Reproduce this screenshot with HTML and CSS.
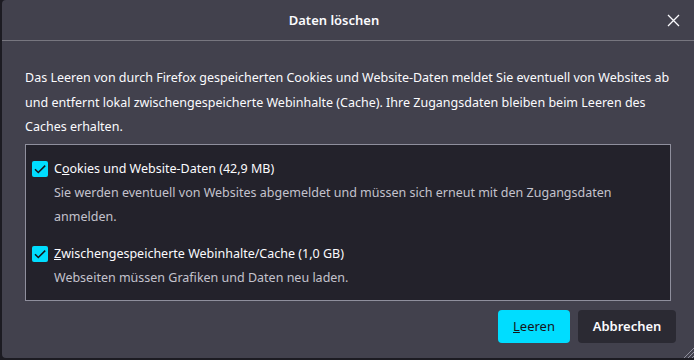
FILE: index.html
```html
<!DOCTYPE html>
<html lang="de">
<head>
<meta charset="utf-8">
<title>Daten löschen</title>
<link rel="stylesheet" href="styles.css">
</head>
<body>
<div class="dialog">
  <div class="header">
    <div class="title">Daten löschen</div>
    <button class="close" aria-label="Schließen">
      <svg width="13" height="13" viewBox="0 0 13 13"><path d="M1 1 L12 12 M12 1 L1 12" stroke="#fbfbfe" stroke-width="1.3" fill="none"/></svg>
    </button>
  </div>
  <div class="content">
    <p class="intro">Das Leeren von durch Firefox gespeicherten Cookies und Website-Daten meldet Sie eventuell von Websites ab und entfernt lokal zwischengespeicherte Webinhalte (Cache). Ihre Zugangsdaten bleiben beim Leeren des Caches erhalten.</p>
    <div class="box">
      <div class="option">
        <div class="row">
          <span class="check"><svg width="16" height="16" viewBox="0 0 16 16"><path d="M3 8.2 L6.3 11.5 L13.2 4.6" stroke="#15141a" stroke-width="1.5" fill="none"/></svg></span>
          <span class="label">C<u>o</u>okies und Website-Daten (42,9 MB)</span>
        </div>
        <div class="desc">Sie werden eventuell von Websites abgemeldet und müssen sich erneut mit den Zugangsdaten anmelden.</div>
      </div>
      <div class="option">
        <div class="row">
          <span class="check"><svg width="16" height="16" viewBox="0 0 16 16"><path d="M3 8.2 L6.3 11.5 L13.2 4.6" stroke="#15141a" stroke-width="1.5" fill="none"/></svg></span>
          <span class="label"><u>Z</u>wischengespeicherte Webinhalte/Cache (1,0 GB)</span>
        </div>
        <div class="desc">Webseiten müssen Grafiken und Daten neu laden.</div>
      </div>
    </div>
  </div>
  <div class="buttons">
    <button class="btn primary"><u>L</u>eeren</button>
    <button class="btn secondary">Abbrechen</button>
  </div>
  <svg class="grip" width="14" height="14" viewBox="0 0 14 14"><path d="M14 2 L2 14 M14 6 L6 14 M14 10 L10 14" stroke="#8f8f9d" stroke-width="1" fill="none"/></svg>
</div>
</body>
</html>
```
FILE: styles.css
```css
html, body {
  margin: 0;
  padding: 0;
}
body {
  background: #1c1b22;
  font-family: "Noto Sans", "Open Sans", sans-serif;
  font-size: 12.5px;
  color: #fbfbfe;
  overflow: hidden;
}
.dialog {
  position: relative;
  margin-left: 2px;
  height: 358px;
  background: #42414d;
  border-radius: 4px 0 0 4px;
  display: flex;
  flex-direction: column;
}
.header {
  height: 40px;
  border-bottom: 1px solid #77767f;
  display: flex;
  align-items: center;
}
.title {
  flex: 1;
  text-align: center;
  font-weight: 600;
  font-size: 13px;
}
.close {
  width: 13px;
  height: 13px;
  margin: 0 14px 0 1px;
  padding: 0;
  border: 0;
  background: none;
  display: flex;
}
.content {
  padding: 0 23px;
}
.intro {
  margin: 25px 0 4px;
  line-height: 24.5px;
}
.box {
  background: #23222b;
  border: 1px solid #8f8f9d;
  padding: 12px 6px 13px;
  height: 130px;
}
.option + .option {
  margin-top: 13px;
}
.row {
  display: flex;
  align-items: center;
  height: 24px;
}
.check {
  width: 16px;
  height: 16px;
  background: #00ddff;
  border-radius: 2px;
  margin-right: 6px;
  display: flex;
}
.desc {
  margin-left: 22px;
  line-height: 24px;
  color: #c4c3cd;
}
.buttons {
  display: flex;
  justify-content: flex-end;
  gap: 8px;
  padding: 9px 18px 0 0;
}
.btn {
  font-family: inherit;
  font-size: 13px;
  font-weight: 600;
  height: 33px;
  border: 0;
  border-radius: 4px;
  padding: 0;
}
.primary {
  width: 72px;
  background: #00ddff;
  color: #15141a;
  font-weight: 400;
}
.secondary {
  width: 98px;
  background: #2b2a33;
  color: #fbfbfe;
}
.grip {
  position: absolute;
  right: 0;
  bottom: -2px;
}
```
